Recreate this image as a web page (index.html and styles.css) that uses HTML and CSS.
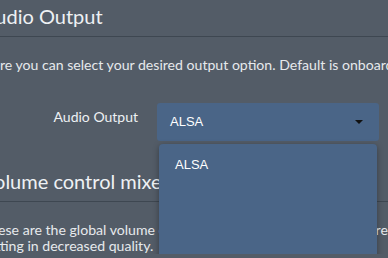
FILE: index.html
```html
<!DOCTYPE html>
<html lang="en">

<head>
    <meta charset="UTF-8">
    <meta name="viewport" content="width=device-width, initial-scale=1.0">
    <title>Audio settings</title>
    <link rel="stylesheet" href="styles.css">
</head>

<body>
    <div class="settings">
        <!-- Audio output -->
        <section class="section">
            <h2 class="section-title">Audio Output</h2>
            <p class="help">Here you can select your desired output option. Default is onboard audio.</p>

            <div class="form-row">
                <label class="form-label" for="output">Audio Output</label>
                <div class="select open" id="output">
                    <div class="select-value">ALSA</div>
                    <span class="select-arrow"></span>
                    <!-- open dropdown -->
                    <ul class="select-menu">
                        <li class="select-option">ALSA</li>
                    </ul>
                </div>
            </div>
        </section>

        <!-- Mixer -->
        <section class="section">
            <h2 class="section-title">Volume control mixer</h2>
            <p class="help">These are the global volume controls of the device. Changes there are<br>setting in decreased quality.</p>
        </section>
    </div>
</body>

</html>
```

FILE: styles.css
```css
/* page */
body {
    margin: 0;
    background-color: #535c67;
    font-family: Lato, "Open Sans", sans-serif;
    color: #eef1f4;
    overflow: hidden;
}

.settings {
    margin-left: -18px;
    width: 460px;
}

/* section headings */
.section-title {
    margin: 4px 0 0;
    padding-bottom: 8px;
    font-size: 20px;
    font-weight: 400;
    line-height: 24px;
    border-bottom: 1px solid #3e4751;
}

.section + .section .section-title {
    margin-top: 28px;
}

.help {
    margin: 20px 0 0;
    font-size: 14.1px;
    line-height: 16px;
    color: #e6e9ec;
    white-space: nowrap;
}

/* form row */
.form-row {
    display: flex;
    align-items: flex-start;
    margin-top: 30px;
}

.form-label {
    width: 156px;
    margin-right: 19px;
    padding-top: 6px;
    font-size: 14px;
    line-height: 16px;
    text-align: right;
}

/* select box */
.select {
    position: relative;
    width: 222px;
    height: 38px;
    background-color: #4a6587;
    border-radius: 3px;
    font-family: "Liberation Sans", Arial, sans-serif;
    font-size: 13px;
    color: #fff;
}

.select-value {
    padding-left: 13px;
    line-height: 38px;
}

.select-arrow {
    position: absolute;
    top: 17px;
    right: 16px;
    border-left: 4px solid transparent;
    border-right: 4px solid transparent;
    border-top: 4px solid #111;
}

.select-menu {
    position: absolute;
    top: 41px;
    left: 2px;
    right: 2px;
    height: 107px;
    margin: 0;
    padding: 12px 0 0;
    list-style: none;
    background-color: #4a6587;
    border-radius: 4px;
    box-shadow: 0 2px 6px rgba(0, 0, 0, 0.35);
}

.select-option {
    padding-left: 16px;
    line-height: 18px;
}
```
